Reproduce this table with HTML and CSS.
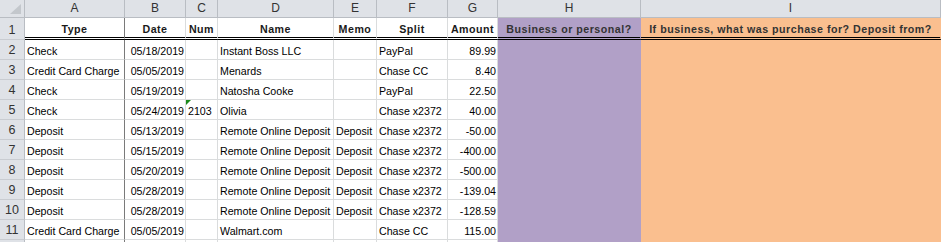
FILE: index.html
```html
<!DOCTYPE html>
<html>
<head>
<meta charset="utf-8">
<link rel="stylesheet" href="styles.css">
</head>
<body>
<div class="sheet">
  <div class="corner"><svg class="corner-tri" width="12" height="11" viewBox="0 0 12 11"><polygon points="11,0 11,10 0,10" fill="#c3c7cc"/></svg></div>
  <div class="colhead">A</div>
  <div class="colhead">B</div>
  <div class="colhead">C</div>
  <div class="colhead">D</div>
  <div class="colhead">E</div>
  <div class="colhead">F</div>
  <div class="colhead">G</div>
  <div class="colhead">H</div>
  <div class="colhead">I</div>

  <div class="rowhead r1">1</div>
  <div class="cell hdr ca">Type</div>
  <div class="cell hdr">Date</div>
  <div class="cell hdr">Num</div>
  <div class="cell hdr">Name</div>
  <div class="cell hdr">Memo</div>
  <div class="cell hdr">Split</div>
  <div class="cell hdr">Amount</div>
  <div class="cell hdr biz">Business or personal?</div>
  <div class="cell hdr note">If business, what was purchase for? Deposit from?</div>

  <div class="rowhead">2</div>
  <div class="cell ca">Check</div>
  <div class="cell num">05/18/2019</div>
  <div class="cell"></div>
  <div class="cell">Instant Boss LLC</div>
  <div class="cell"></div>
  <div class="cell">PayPal</div>
  <div class="cell num">89.99</div>
  <div class="cell biz"></div>
  <div class="cell note"></div>

  <div class="rowhead">3</div>
  <div class="cell ca">Credit Card Charge</div>
  <div class="cell num">05/05/2019</div>
  <div class="cell"></div>
  <div class="cell">Menards</div>
  <div class="cell"></div>
  <div class="cell">Chase CC</div>
  <div class="cell num">8.40</div>
  <div class="cell biz"></div>
  <div class="cell note"></div>

  <div class="rowhead">4</div>
  <div class="cell ca">Check</div>
  <div class="cell num">05/19/2019</div>
  <div class="cell"></div>
  <div class="cell">Natosha Cooke</div>
  <div class="cell"></div>
  <div class="cell">PayPal</div>
  <div class="cell num">22.50</div>
  <div class="cell biz"></div>
  <div class="cell note"></div>

  <div class="rowhead">5</div>
  <div class="cell ca">Check</div>
  <div class="cell num">05/24/2019</div>
  <div class="cell flagged">2103<span class="flag"></span></div>
  <div class="cell">Olivia</div>
  <div class="cell"></div>
  <div class="cell">Chase x2372</div>
  <div class="cell num">40.00</div>
  <div class="cell biz"></div>
  <div class="cell note"></div>

  <div class="rowhead">6</div>
  <div class="cell ca">Deposit</div>
  <div class="cell num">05/13/2019</div>
  <div class="cell"></div>
  <div class="cell">Remote Online Deposit</div>
  <div class="cell">Deposit</div>
  <div class="cell">Chase x2372</div>
  <div class="cell num">-50.00</div>
  <div class="cell biz"></div>
  <div class="cell note"></div>

  <div class="rowhead">7</div>
  <div class="cell ca">Deposit</div>
  <div class="cell num">05/15/2019</div>
  <div class="cell"></div>
  <div class="cell">Remote Online Deposit</div>
  <div class="cell">Deposit</div>
  <div class="cell">Chase x2372</div>
  <div class="cell num">-400.00</div>
  <div class="cell biz"></div>
  <div class="cell note"></div>

  <div class="rowhead">8</div>
  <div class="cell ca">Deposit</div>
  <div class="cell num">05/20/2019</div>
  <div class="cell"></div>
  <div class="cell">Remote Online Deposit</div>
  <div class="cell">Deposit</div>
  <div class="cell">Chase x2372</div>
  <div class="cell num">-500.00</div>
  <div class="cell biz"></div>
  <div class="cell note"></div>

  <div class="rowhead">9</div>
  <div class="cell ca">Deposit</div>
  <div class="cell num">05/28/2019</div>
  <div class="cell"></div>
  <div class="cell">Remote Online Deposit</div>
  <div class="cell">Deposit</div>
  <div class="cell">Chase x2372</div>
  <div class="cell num">-139.04</div>
  <div class="cell biz"></div>
  <div class="cell note"></div>

  <div class="rowhead">10</div>
  <div class="cell ca">Deposit</div>
  <div class="cell num">05/28/2019</div>
  <div class="cell"></div>
  <div class="cell">Remote Online Deposit</div>
  <div class="cell">Deposit</div>
  <div class="cell">Chase x2372</div>
  <div class="cell num">-128.59</div>
  <div class="cell biz"></div>
  <div class="cell note"></div>

  <div class="rowhead">11</div>
  <div class="cell ca">Credit Card Charge</div>
  <div class="cell num">05/05/2019</div>
  <div class="cell"></div>
  <div class="cell">Walmart.com</div>
  <div class="cell"></div>
  <div class="cell">Chase CC</div>
  <div class="cell num">115.00</div>
  <div class="cell biz"></div>
  <div class="cell note"></div>

  <div class="rowhead"></div>
  <div class="cell ca"></div>
  <div class="cell"></div>
  <div class="cell"></div>
  <div class="cell"></div>
  <div class="cell"></div>
  <div class="cell"></div>
  <div class="cell"></div>
  <div class="cell biz"></div>
  <div class="cell note"></div>
</div>
</body>
</html>
```
FILE: styles.css
```css
* { box-sizing: border-box; }
html, body {
  margin: 0;
  padding: 0;
  background: #ffffff;
  overflow: hidden;
}
.sheet {
  display: grid;
  grid-template-columns: 25px 100px 61px 32px 116px 43px 71px 50px 143px 300px;
  grid-template-rows: 18px 22px repeat(11, 20px);
  width: 941px;
  height: 242px;
  overflow: hidden;
  font-family: "Liberation Sans", Arial, sans-serif;
  font-size: 10.67px;
  color: #000;
}
.corner {
  background: #dfe2e7;
  border-right: 1px solid #b9bdc3;
  border-bottom: 1px solid #b9bdc3;
  display: flex;
  justify-content: flex-end;
  align-items: flex-end;
  padding: 0 2px 2px 0;
}
.corner-tri { display: block; }
.colhead {
  background: #dfe2e7;
  border-right: 1px solid #b9bdc3;
  border-bottom: 1px solid #b9bdc3;
  color: #333;
  font-size: 12px;
  display: flex;
  align-items: center;
  justify-content: center;
  line-height: 17px;
}
.rowhead {
  background: #dfe2e7;
  border-right: 1px solid #b9bdc3;
  border-bottom: 1px solid #c9ccd1;
  color: #333;
  font-size: 12.5px;
  display: flex;
  align-items: flex-end;
  justify-content: center;
  line-height: 15px;
  padding-bottom: 1px;
}
.cell {
  border-right: 1px solid #dadcdd;
  border-bottom: 1px solid #dadcdd;
  display: flex;
  align-items: flex-end;
  padding: 0 1px 1px 2px;
  line-height: 14px;
  white-space: nowrap;
  overflow: visible;
  position: relative;
}
.ca { border-right-color: #7a7a7a; }
.num { justify-content: flex-end; padding-right: 1px; }
.hdr {
  font-weight: bold;
  letter-spacing: 0.5px;
  justify-content: center;
  border-bottom: 3px double #000;
  color: #1a1a1a;
  padding-left: 0;
  padding-right: 0;
}
.hdr.ca { border-bottom: 3px double #000; }
.biz {
  background: #b1a0c7;
  border-right-color: #b1a0c7;
  border-bottom-color: #b1a0c7;
}
.note {
  background: #fabf8f;
  border-right-color: #fabf8f;
  border-bottom-color: #fabf8f;
}
.hdr.biz, .hdr.note {
  border-bottom: 3px double #000;
  color: #333;
}
.flag {
  position: absolute;
  left: 0;
  top: 0;
  width: 0;
  height: 0;
  border-top: 5px solid #1c8a1c;
  border-right: 5px solid transparent;
}
```
